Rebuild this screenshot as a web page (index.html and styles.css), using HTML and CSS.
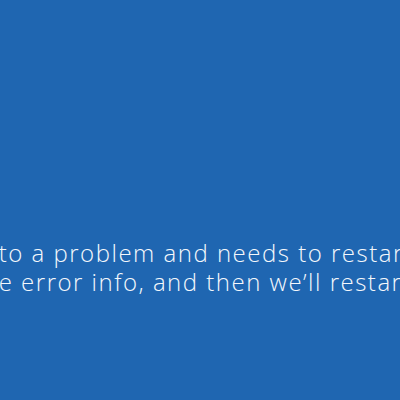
FILE: index.html
```html
<!DOCTYPE html>
<html>
<head>
<meta charset="utf-8">
<link rel="stylesheet" href="styles.css">
</head>
<body>
<main class="screen">
  <div class="message">
    <p class="line">Your PC ran into a problem and needs to restart. We’re just</p>
    <p class="line">collecting some error info, and then we’ll restart for you.</p>
  </div>
</main>
</body>
</html>
```
FILE: styles.css
```css
html, body {
  margin: 0;
  padding: 0;
  width: 400px;
  height: 400px;
  overflow: hidden;
  background: #1f66b1;
}
.screen {
  width: 400px;
  height: 400px;
  overflow: hidden;
  display: flex;
  flex-direction: column;
  padding-top: 238px;
  box-sizing: border-box;
}
.message {
  margin-left: -176px;
  white-space: nowrap;
  font-family: "Open Sans", sans-serif;
  font-weight: 300;
  font-size: 24px;
  letter-spacing: 1.5px;
  line-height: 29px;
  color: #f4f8fc;
}
.line {
  margin: 0;
}
```
